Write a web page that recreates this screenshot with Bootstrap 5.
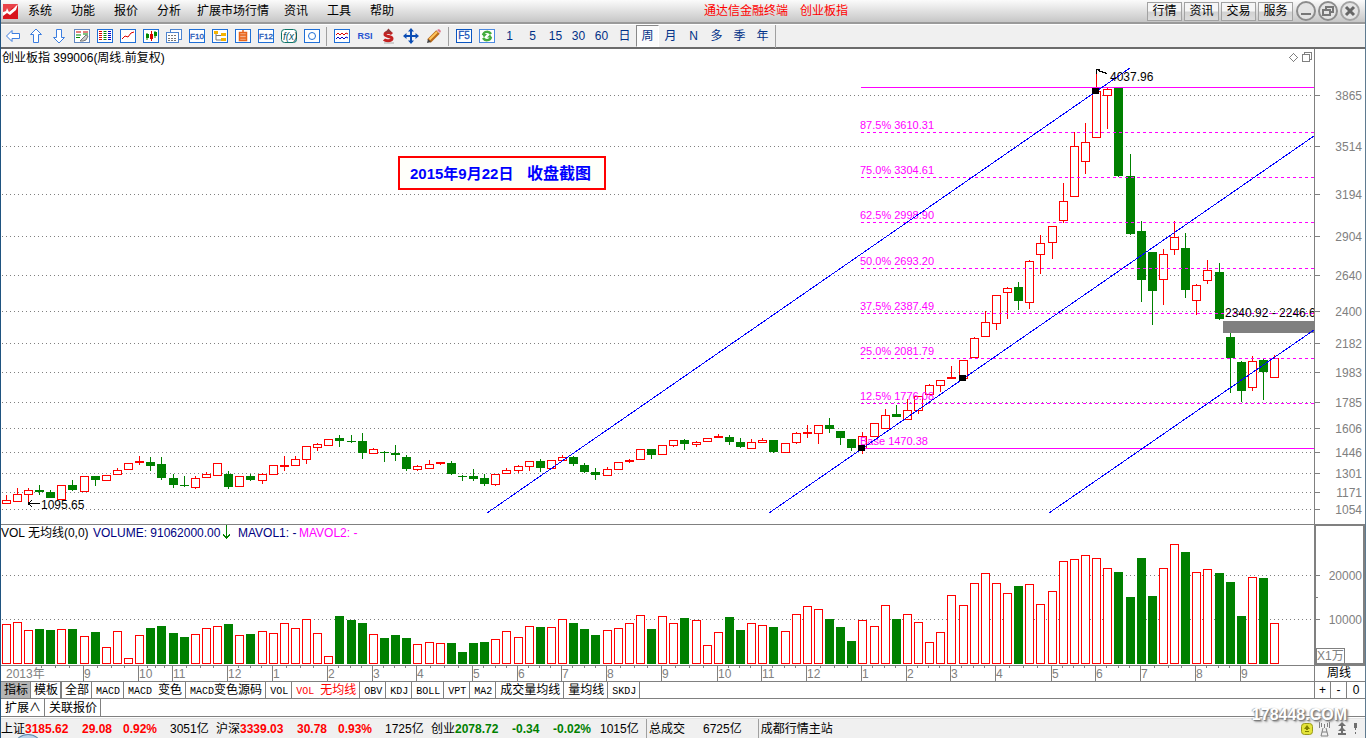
<!DOCTYPE html>
<html lang="zh-CN">
<head>
<meta charset="utf-8">
<meta name="viewport" content="width=device-width, initial-scale=1">
<title>通达信金融终端 创业板指</title>
<link href="https://cdn.jsdelivr.net/npm/bootstrap@5.3.0/dist/css/bootstrap.min.css" rel="stylesheet">
<style>
  body { font: 12px/16px "Liberation Sans", "Noto Sans CJK SC", sans-serif; color: #000; background: #fff; }
  .app-frame { border-left: 1px solid #1f5380; border-right: 1px solid #5f7b90; }
  button { font: inherit; color: inherit; }
  .menu-bar { height: 24px; background: linear-gradient(#fbfbfb, #c6c6c6); border-bottom: 2px solid #9a9a9a; padding-left: 2px; }
  .menu-link { color: #000; text-decoration: none; padding: 0 10px 0 9px; }
  .menu-link.wide { padding: 0 6px; }
  .app-title { color: #f00; padding-right: 299px; }
  .gray-btn { width: 35px; height: 19px; border: 1px solid #a2a2a2; background: linear-gradient(#f6f6f6 45%, #d2d2d2 55%, #dcdcdc); padding: 0; line-height: 16px; }
  .btn-set { gap: 2px; padding-right: 2px; }
  .round-btn { width: 22px; height: 22px; border: 0; background: none; padding: 0; }
  .tool-bar { height: 25px; background: #f0f0f0; border-top: 1px solid #fff; border-bottom: 2px solid #6b6b6b; color: #003087; }
  .tool-btn { width: 23px; height: 22px; border: 0; background: none; padding: 0; }
  .tool-btn.on { background: #fbfbfb; border: 1px solid #fff; border-top-color: #888; border-left-color: #888; }
  .tool-sep { width: 1px; height: 19px; background: #a0a0a0; margin: 0 3px; }
  .tool-sep.tall { height: 23px; margin: 0 0 0 1px; }
  svg { display: block; }
  .chart-pane { width: 100%; height: auto; }
  .crisp { shape-rendering: crispEdges; }
  .tab-row { height: 17px; border-bottom: 1px solid #808080; }
  .tab-row.second { height: 18px; }
  .tab-btn { height: 16px; border: 0; border-right: 1px solid #808080; background: none; padding: 0 3px 0 4px; line-height: 16px; white-space: pre; }
  .tab-btn.tight { padding: 0 2px 0 3px; }
  .tab-btn.strong { border-right-width: 2px; }
  .tab-btn.current { background: #b4b4b4; }
  .tab-btn.second { height: 17px; }
  .tab-btn.picked { color: #f00; }
  .mono { font: 10px/16px "Liberation Mono", monospace; white-space: pre; }
  .zoom-btn { width: 16px; height: 16px; border: 0; border-left: 1px solid #808080; background: none; padding: 0; }
  .zoom-btn.last { width: 19px; }
  .status-bar { min-height: 20px; background: #f0f0f0; margin-top: 1px; border-top: 1px solid #e4e4e4; line-height: 20px; }
  .quote { display: grid; grid-template-columns: 24px 57px 41px 47px 46px; white-space: nowrap; }
  .up { color: #f00; font-weight: bold; }
  .down { color: #008000; font-weight: bold; }
  .status-cell { border-left: 1px solid #a0a0a0; padding-left: 2px; white-space: nowrap; }
  .sum-label { width: 54px; }
  .watermark { right: 18px; bottom: 12px; font: bold 16px/24px "Liberation Sans", sans-serif; color: #fff; text-shadow: 1px 1px 1px #777, -1px 0 1px #aaa, 2px 2px 2px #999; }
  .orb { left: 14px; bottom: -16px; width: 26px; height: 21px; border-radius: 50%; background: #b9d3ea; border: 1px solid #5d87ad; }
</style>
</head>
<body>
<div class="app-frame d-flex flex-column min-vh-100 position-relative overflow-hidden">
  <header class="menu-bar d-flex align-items-center">
    <svg width="16" height="15" viewBox="0 0 16 15" class="flex-shrink-0"><rect width="15" height="15" fill="#d8151d"/><path d="M0 0H15L13 3 9 4 6 8 4 4 3 7 0 8Z" fill="#e9434a"/><path d="M0 8 3 7 4 4 6 8 11 4 15 0 13 6 7 11 4 9 0 12Z" fill="#fff"/></svg>
    <nav class="d-flex">
      <a class="menu-link" href="#">系统</a><a class="menu-link" href="#">功能</a><a class="menu-link" href="#">报价</a><a class="menu-link" href="#">分析</a><a class="menu-link wide" href="#">扩展市场行情</a><a class="menu-link" href="#">资讯</a><a class="menu-link" href="#">工具</a><a class="menu-link" href="#">帮助</a>
    </nav>
    <div class="app-title d-flex gap-2 ms-auto"><span class="me-1">通达信金融终端</span><span>创业板指</span></div>
    <div class="btn-set d-flex align-items-center">
      <button class="gray-btn">行情</button><button class="gray-btn">资讯</button><button class="gray-btn">交易</button><button class="gray-btn">服务</button>
    </div>
    <div class="d-flex pe-1">
      <button class="round-btn" aria-label="最小化"><svg width="22" height="22" fill="none" stroke="#8c8c8c" stroke-width="2"><circle cx="11" cy="11" r="9" fill="#e4e4e4"/><path d="M6 14H16" stroke="#777"/></svg></button>
      <button class="round-btn" aria-label="还原"><svg width="22" height="22" fill="none" stroke="#8c8c8c" stroke-width="2"><circle cx="11" cy="11" r="9" fill="#e4e4e4"/><path d="M9 9V7H16V12H14M6 10H13V15H6Z" stroke="#777"/></svg></button>
      <button class="round-btn" aria-label="关闭"><svg width="22" height="22" fill="none" stroke="#a4a4a4" stroke-width="2"><circle cx="11" cy="11" r="9" fill="#e4e4e4"/><path d="M7 7 15 15M15 7 7 15" stroke="#666" stroke-width="3"/></svg></button>
    </div>
  </header>

  <div class="tool-bar d-flex align-items-center" id="tools" role="toolbar" aria-label="工具栏"></div>

  <main>
    <svg class="chart-pane" id="price" viewBox="1 49 1364 475" role="img" aria-label="K线图"></svg>
    <svg class="chart-pane" id="volume" viewBox="1 524 1364 141" role="img" aria-label="成交量"></svg>
    <svg class="chart-pane" id="months" viewBox="1 665 1364 17" role="img" aria-label="时间轴"></svg>
  </main>

  <div class="tab-row d-flex">
    <div class="d-flex" id="tabs"></div>
    <div class="d-flex ms-auto">
      <button class="zoom-btn">+</button><button class="zoom-btn">-</button><button class="zoom-btn last">0</button>
    </div>
  </div>
  <div class="tab-row second d-flex">
    <button class="tab-btn second">扩展∧</button><button class="tab-btn second">关联报价</button>
  </div>

  <footer class="status-bar d-flex flex-grow-1">
    <div class="quote"><span>上证</span><span class="up">3185.62</span><span class="up">29.08</span><span class="up">0.92%</span><span>3051亿</span></div>
    <div class="quote"><span>沪深</span><span class="up">3339.03</span><span class="up">30.78</span><span class="up">0.93%</span><span>1725亿</span></div>
    <div class="quote"><span>创业</span><span class="down">2078.72</span><span class="down">-0.34</span><span class="down">-0.02%</span><span>1015亿</span></div>
    <div class="status-cell d-flex"><span class="sum-label">总成交</span><span class="pe-3">6725亿</span></div>
    <div class="status-cell flex-grow-1">成都行情主站</div>
    <svg width="66" height="20" viewBox="1299 718 66 20" class="flex-shrink-0">
      <rect x="1301.500" y="722.500" width="11" height="11" rx="3" fill="#e4e43a" stroke="#99991a"/>
      <path d="M1307 724l-3 4h2v1h2v-1h2ZM1305 730h4v1h-4Z" fill="#808000"/>
      <g fill="none" stroke="#808080"><path d="M1324.500 723V727M1323 727 1321 735H1328L1326 727M1322 731H1327M1321.500 722v4M1327.500 722v4M1319.500 721v6M1329.500 721v6"/></g>
      <path d="M1342 721 1338 725H1341V727L1338 730H1341V732H1338V734H1346V732H1343V730H1346L1343 727V725H1346ZM1354 722h3v5h-1v2h-1v-2h-1ZM1355 731h1v2h-1Z" fill="#6f6f6f"/>
    </svg>
  </footer>
  <div class="watermark position-absolute">178448.COM</div>
  <div class="orb position-absolute"></div>
</div>

<script src="https://cdn.jsdelivr.net/npm/bootstrap@5.3.0/dist/js/bootstrap.bundle.min.js"></script>
<script>
/* ---------- toolbar ---------- */
const box = (inner, c = '#1f6fd6') => `<rect x=".5" y="1.5" width="15" height="13" fill="#fff" stroke="${c}"/>${inner}`;
const label = (t, size = 8) => `<text x="8" y="11" text-anchor="middle" font-size="${size}" fill="#1d55b8" stroke="#1d55b8" stroke-width=".3">${t}</text>`;
const icons = [
  ['后退', '<path d="M1.500 8 7 2.500V5.500H14.500V10.500H7V13.500Z" fill="#fff" stroke="#3c7ee0"/>'],
  ['上移', '<path d="M8 1 13.500 6.500H10.500V14.500H5.500V6.500H2.500Z" fill="#fff" stroke="#3c7ee0"/>'],
  ['下移', '<path d="M8 15 13.500 9.500H10.500V1.500H5.500V9.500H2.500Z" fill="#fff" stroke="#3c7ee0"/>'],
  ['选项', box('<path d="M2 4h5M9 4h5" stroke="#c00"/><path d="M2 7h5M2 9.500h4M9 6h5" stroke="#080"/><path d="M6 13l6-6 2 1-2 4-3 1Z" fill="#ccc" stroke="#777"/>', '#5f86c0')],
  ['报价表', box('<path d="M3.500 3V13" stroke="#d00" stroke-width="3" stroke-dasharray="1 1"/><path d="M8 3V13" stroke="#080" stroke-width="3" stroke-dasharray="1 1"/><path d="M12.500 3V13" stroke="#00c" stroke-width="3" stroke-dasharray="1 1"/>')],
  ['分时', box('<path d="M2 11 5 8 8 9 11 5 14 4" fill="none" stroke="#d00"/>')],
  ['K线', box('<path d="M4 5V12M12 3V10" stroke="#080"/><path d="M3 6h3v4H3ZM11 4h3v4h-3Z" fill="#080"/><path d="M8.500 3V13" stroke="#d00"/><path d="M7 6h3v5H7Z" fill="#d00"/>')],
  ['多窗口', '<rect x="4.500" y="1.500" width="11" height="10" fill="#fff" stroke="#4d84d0"/><rect x=".5" y="4.500" width="12" height="10" fill="#fff" stroke="#4d84d0"/><path d="M2 7.500h9M2 10.500h9M2 12.500h9" stroke="#777" stroke-dasharray="2 1"/>'],
  ['F10', box(label('F10'))],
  ['树形', box('<path d="M4 5V12H9M4 7.500H9" fill="none" stroke="#777"/><path d="M2 3h4v3H2ZM9 5h5v3H9ZM9 10h5v3H9Z" fill="#f5b400"/>')],
  ['自选', box('<path d="M8 2v2M4.500 4.500h7v8h-7ZM5 7h6M5 10h6" stroke="#e8641b" stroke-width="1.500" fill="#f6b08a"/>')],
  ['F12', box(label('F12'))],
  ['公式', '<rect x=".5" y="1.500" width="15" height="13" rx="3" fill="#fff" stroke="#0d7468"/><text x="2" y="12" font-size="10" font-style="italic" fill="#0d5468">f(x)</text>'],
  ['圆', box('<circle cx="8" cy="8" r="3.500" fill="none" stroke="#1f6fd6"/>')],
  null,
  ['指标线', box('<path d="M2 7l2-2 2 2 2-2 2 2 2-2 2 1" fill="none" stroke="#d00"/><path d="M2 11l2-2 2 2 2-2 2 2 2-2 2 1" fill="none" stroke="#00c"/>')],
  ['RSI', '<text x="8" y="11" text-anchor="middle" font-size="9" font-weight="bold" fill="#2450d0">RSI</text>'],
  ['资金', '<path d="M12 6C10 4 5 4 5 6.500S12 8 12 10.500 6 13.500 4 11.500" fill="none" stroke="#c42222" stroke-width="3"/><path d="M5 4.500 8.500.5 12 4.500Z" fill="#8b3a3a"/><path d="M4 15h10" stroke="#aaa"/>'],
  ['移动', '<path d="M8 0 11 3.500H9V7H12.500V5L16 8 12.500 11V9H9V12.500H11L8 16 5 12.500H7V9H3.500V11L0 8 3.500 5V7H7V3.500H5Z" fill="#0b4db4"/>'],
  ['画线', '<path d="M3 13 12 4" stroke="#bb6b1a" stroke-width="5"/><path d="M3.500 11.500 11 4" stroke="#ffc65c" stroke-width="2"/><path d="M11 2l3 3 1-2-2-2Z" fill="#d78" /><path d="M1 15l1-4 3 3Z" fill="#444"/>'],
  null,
  ['F5', box(label('F5', 10), '#0a55c0')],
  ['刷新', box('<path d="M4 7C5 3 10 3 12 6M12 9C11 13 6 13 4 10" fill="none" stroke="#45ad3f" stroke-width="2.500"/><path d="M13 9.500H8L11 6.500ZM3 6h5L5 9.500Z" fill="#45ad3f"/>', '#4d8ae0')]
];
const periods = ['1', '5', '15', '30', '60', '日', '周', '月', 'N', '多', '季', '年'];
document.getElementById('tools').innerHTML =
  icons.map(i => i ? `<button class="tool-btn d-flex align-items-center justify-content-center" aria-label="${i[0]}"><svg width="16" height="16">${i[1]}</svg></button>` : '<span class="tool-sep"></span>').join('') +
  periods.map(p => `<button class="tool-btn${p === '周' ? ' on' : ''}">${p}</button>`).join('') + '<span class="tool-sep tall"></span>';

/* ---------- indicator tabs ---------- */
const tabs = ['指标', '模板', '全部', 'MACD', 'MACD 变色', 'MACD变色源码', 'VOL', 'VOL 无均线', 'OBV', 'KDJ', 'BOLL', 'VPT', 'MA2', '成交量均线', '量均线', 'SKDJ'];
document.getElementById('tabs').innerHTML = tabs.map((t, i) =>
  `<button class="tab-btn${i < 3 ? ' tight' : ''}${i === 0 ? ' current' : ''}${i === 1 ? ' strong' : ''}${i === 7 ? ' picked' : ''}">${t.replace(/[A-Z0-9 ]+/g, '<span class="mono">$&</span>')}</button>`).join('');

/* ---------- charts ---------- */
const RED = '#f00', GREEN = '#008000', GRAY = '#808080', PINK = '#f0f', BLUE = '#00f';
const barX = i => Math.floor(2.18 + 11.127 * i);
const hline = (x1, x2, y, c, dash) => `<path class="crisp" d="M${x1} ${y + .5}H${x2}" stroke="${c}"${dash ? ` stroke-dasharray="${dash}"` : ''}/>`;
const vline = (x, y1, y2, c) => `<path class="crisp" d="M${x + .5} ${y1}V${y2}" stroke="${c}"/>`;
const text = (x, y, s, c, size = 12, extra = '') => `<text x="${x}" y="${y}" fill="${c}" font-size="${size}" ${extra}>${s}</text>`;
const body = (x, t, b, up) => up
  ? `<rect class="crisp" x="${x + .5}" y="${t + .5}" width="8" height="${Math.max(b - t, 1)}" fill="#fff" stroke="${RED}"/>`
  : `<rect class="crisp" x="${x}" y="${t}" width="9" height="${b - t + 1}" fill="${GREEN}"/>`;

/* each week: colour, high, body top, body bottom, low, volume top */
const weeks = `r495,500,503,503,624 r488,494,501,501,622 r488,490,494,502,630 g485,490,491,494,629 g490,492,497,497,630
r485,485,499,499,629 g480,485,489,490,629 r476,476,491,491,636 g476,476,479,485,632 r475,475,480,480,647
r468,470,474,474,631 r463,463,469,469,658 r456,461,462,464,635 g457,462,465,470,628 g457,464,477,479,626
g474,478,484,487,633 g476,485,485,486,637 r476,478,487,488,634 r472,474,477,477,628 r463,463,475,475,626
g471,474,486,488,624 r476,476,486,486,635 g474,476,479,480,634 r473,474,480,483,631 r465,465,474,474,633
r456,465,466,470,623 r456,459,465,465,628 r446,446,459,463,619 r443,444,447,450,633 r439,439,445,445,656
g435,438,440,446,616 g435,441,441,442,620 g433,441,452,458,623 r448,449,453,453,634 g451,452,452,461,638
g445,453,454,460,635 g455,457,468,470,638 r465,466,469,470,644 r460,464,468,468,642 r462,462,463,464,643
g461,463,473,474,643 g475,476,476,480,652 g469,476,478,480,643 g474,478,483,485,642 r474,474,484,485,639
r468,470,473,473,631 r465,466,470,472,637 r461,461,466,470,626 g459,461,467,471,627 r460,460,468,468,627
r455,457,460,460,619 g456,457,463,465,623 g463,465,471,472,629 g468,472,474,479,635 r467,469,475,475,630
r462,462,469,469,628 r459,460,461,462,623 r449,449,459,459,615 g449,449,454,458,629 r445,445,454,454,616
r440,440,445,446,623 g439,440,443,449,618 r441,442,444,446,620 r438,438,441,441,645 r434,436,437,437,632
g435,437,441,444,617 g438,442,446,447,630 r439,442,448,448,623 r438,440,442,442,625 g440,440,451,452,627
r443,443,452,452,631 r432,433,442,443,614 r425,432,433,437,606 r425,425,433,443,609 g418,425,428,432,619
g431,431,437,444,627 g439,439,447,450,641 r432,436,448,453,620 r423,423,436,436,626 r409,415,428,428,605
g405,414,416,416,619 r399,410,419,419,614 r396,396,410,413,622 r384,385,394,394,642 r380,380,385,391,632
r366,377,378,378,595 r360,360,378,378,605 r337,338,357,357,583 r311,322,336,336,573 r295,295,323,329,583
r287,288,292,318,593 g282,287,300,309,586 r260,261,302,308,584 r235,243,254,273,604 r226,226,242,258,591
r183,201,220,222,561 r132,146,196,196,559 r123,142,161,173,555 r69,91,137,137,558 r88,89,95,128,568
g88,88,175,176,572 g154,176,233,234,597 g221,231,279,301,558 g252,252,290,324,596 r249,254,279,304,568
r221,237,249,254,544 g233,248,289,297,552 r284,285,300,314,572 r260,270,280,283,569 g263,272,318,319,573
g333,337,357,392,582 g361,362,390,401,616 r356,361,387,390,577 g359,360,371,399,578 r355,358,377,377,623`
  .split(/\s+/).map(w => ({ up: w[0] === 'r', v: w.slice(1).split(',').map(Number) }));

const levels = [[95, 3865], [146, 3514], [194, 3194], [236, 2904], [275, 2640], [311, 2400], [343, 2182], [372, 1983], [402, 1785], [428, 1606], [452, 1446], [473, 1301], [492, 1171], [509, 1054]];
const fibs = [[132, '87.5% 3610.31'], [177, '75.0% 3304.61'], [222, '62.5% 2998.90'], [268, '50.0% 2693.20'], [313, '37.5% 2387.49'], [358, '25.0% 2081.79'], [403, '12.5% 1776.08'], [448, 'Base 1470.38']];
let p = '<defs><clipPath id="plot"><path d="M1 49H1314V524H1Z"/></clipPath></defs>';
levels.forEach(([y, n]) => p += hline(2, 1312, y, GRAY, '1 3') + hline(1315, 1320, y, GRAY) + text(1362, y + 5, n, GRAY, 12, 'text-anchor="end"'));
weeks.forEach((w, i) => {
  const x = barX(i), [h, t, b, l] = w.v;
  p += vline(x + 4, h, l + 1, w.up ? RED : GREEN) + body(x, t, b, w.up);
});
p += hline(861, 1314, 87, PINK);
fibs.forEach(([y, s], i) => p += hline(861, 1314, y, PINK, i < 7 ? '3 3' : '') + text(860, y - 3, s, PINK, 11));
p += '<rect class="crisp" x="1223" y="321" width="91" height="12" fill="#808080"/>';
p += `<g clip-path="url(#plot)">${text(1225, 317, '2340.92 - 2246.67', '#000')}</g>`;
p += `<path class="crisp" d="M487 513 1130 68M769 513 1314 136M1049 513 1314 330" stroke="${BLUE}" fill="none"/>`;
[[1092, 88], [959, 375], [858, 445]].forEach(([x, y]) => p += `<rect class="crisp" x="${x}" y="${y}" width="7" height="6"/>`);
p += '<path class="crisp" d="M1096.500 74V69H1100M1098 70.500 1107 73.500M28 503.500H40M28 503.500 32 500.500M28 503.500 32 506.500" stroke="#000" fill="none"/>';
p += text(1110, 81, '4037.96', '#000') + text(41, 509, '1095.65', '#000') + text(2, 62, '创业板指 399006(周线.前复权)', '#000');
p += '<rect class="crisp" x="399" y="157" width="206" height="32" fill="#fffffa" stroke="#f00" stroke-width="2"/>';
p += text(410, 179, '2015年9月22日', '#00f', 15, 'font-weight="bold"') + text(527, 179, '收盘截图', '#00f', 16, 'font-weight="bold"');
p += '<path class="crisp" d="M1289.500 57.500 1293.500 53.500 1297.500 57.500 1293.500 61.500ZM1302.500 54.500H1309.500V61.500H1302.500ZM1304.500 54V52.500H1311.500V59.500H1310" fill="none" stroke="#808080"/>';
p += vline(1314, 49, 524, GRAY);
document.getElementById('price').innerHTML = p;

let v = hline(1, 1365, 524, GRAY) + hline(2, 1312, 575, GRAY, '1 3') + hline(2, 1312, 619, GRAY, '1 3');
weeks.forEach((w, i) => v += body(barX(i), w.v[4], 663, w.up));
v += `<rect class="crisp" x="1315" y="525" width="49" height="139" fill="none" stroke="${GRAY}" stroke-width="2"/>`;
v += hline(1316, 1320, 575, GRAY) + hline(1316, 1318, 597, GRAY) + hline(1316, 1320, 619, GRAY);
v += text(1362, 580, '20000', GRAY, 12, 'text-anchor="end"') + text(1362, 624, '10000', GRAY, 12, 'text-anchor="end"');
v += `<rect class="crisp" x="1316.500" y="648.500" width="28" height="15" fill="#fff" stroke="${GRAY}"/>` + text(1317, 660, 'X1万', GRAY);
v += text(1, 537, 'VOL 无均线(0,0)', '#000') + text(93, 537, 'VOLUME: 91062000.00', '#000080') + text(238, 537, 'MAVOL1: -', '#000080') + text(299, 537, 'MAVOL2: -', PINK);
v += '<path class="crisp" d="M226.500 525V538M223 534.500 226.500 538 230 534.500" fill="none" stroke="#008000"/>';
document.getElementById('volume').innerHTML = v;

const starts = [[7, 9], [12, 10], [15, 11], [20, 12], [24, 1], [29, 2], [33, 3], [37, 4], [42, 5], [46, 6], [50, 7], [54, 8], [59, 9], [64, 10], [68, 11], [72, 12], [77, 1], [81, 2], [85, 3], [89, 4], [94, 5], [98, 6], [102, 7], [107, 8], [111, 9]];
let m = hline(1, 1365, 665, GRAY) + hline(1, 1365, 681, GRAY) + text(6, 678, '2013年', GRAY) + vline(1314, 665, 682, GRAY) + text(1327, 677, '周线', '#000');
let prev = 27;
starts.forEach(([i, n]) => {
  const x = barX(i) + 3;
  m += vline(x, 665, 682, GRAY) + text(x + 1, 678, n, GRAY);
  for (let k = 1; k < 4; k++) m += vline(Math.round(prev + (x - prev) * k / 4), 666, 668, GRAY);
  prev = x;
});
document.getElementById('months').innerHTML = m;
</script>
</body>
</html>
